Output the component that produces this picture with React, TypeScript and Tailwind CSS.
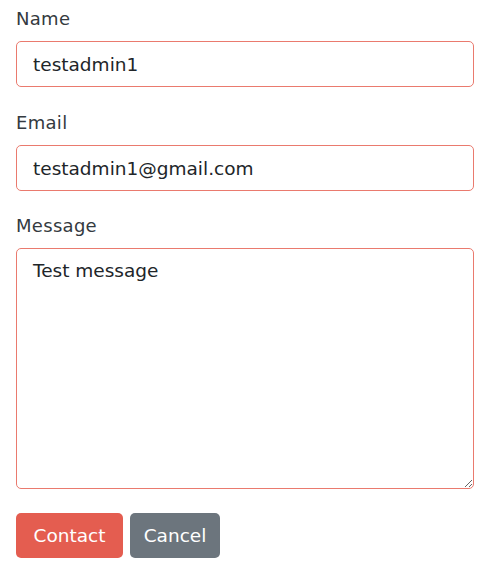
import React from "react";

const font = { fontFamily: '"DejaVu Sans", sans-serif' };

const Field: React.FC<{ label: string; value: string; className: string }> = ({ label, value, className }) => (
  <div className={className}>
    <label className="block text-[18px] leading-[27px] tracking-[0.3px] text-[#343a40] mb-[9px]">{label}</label>
    <input
      readOnly
      value={value}
      className="block w-full h-[46px] px-4 text-[18.5px] text-[#212529] bg-white border border-[#ea7a6e] rounded-[5px] outline-none"
    />
  </div>
);

export default function App() {
  return (
    <div className="bg-white w-[486px] h-[571px] pl-4 pr-[12px] pt-[5px]" style={font}>
      <Field className="mb-[22px]" label="Name" value="testadmin1" />
      <Field className="mb-[21px]" label="Email" value="testadmin1@gmail.com" />
      <div className="mb-[24px]">
        <label className="block text-[18px] leading-[27px] tracking-[0.3px] text-[#343a40] mb-[9px]">Message</label>
        <textarea
          readOnly
          value="Test message"
          className="block w-full h-[241px] px-4 py-[8px] text-[18.5px] text-[#212529] bg-white border border-[#ea7a6e] rounded-[5px] outline-none"
        />
      </div>
      <div className="flex gap-[7px]">
        <button className="h-[45px] w-[107px] rounded-[5px] bg-[#e45d50] text-white text-[18.5px]">Contact</button>
        <button className="h-[45px] w-[90px] rounded-[5px] bg-[#6c757d] text-white text-[18.5px]">Cancel</button>
      </div>
    </div>
  );
}
